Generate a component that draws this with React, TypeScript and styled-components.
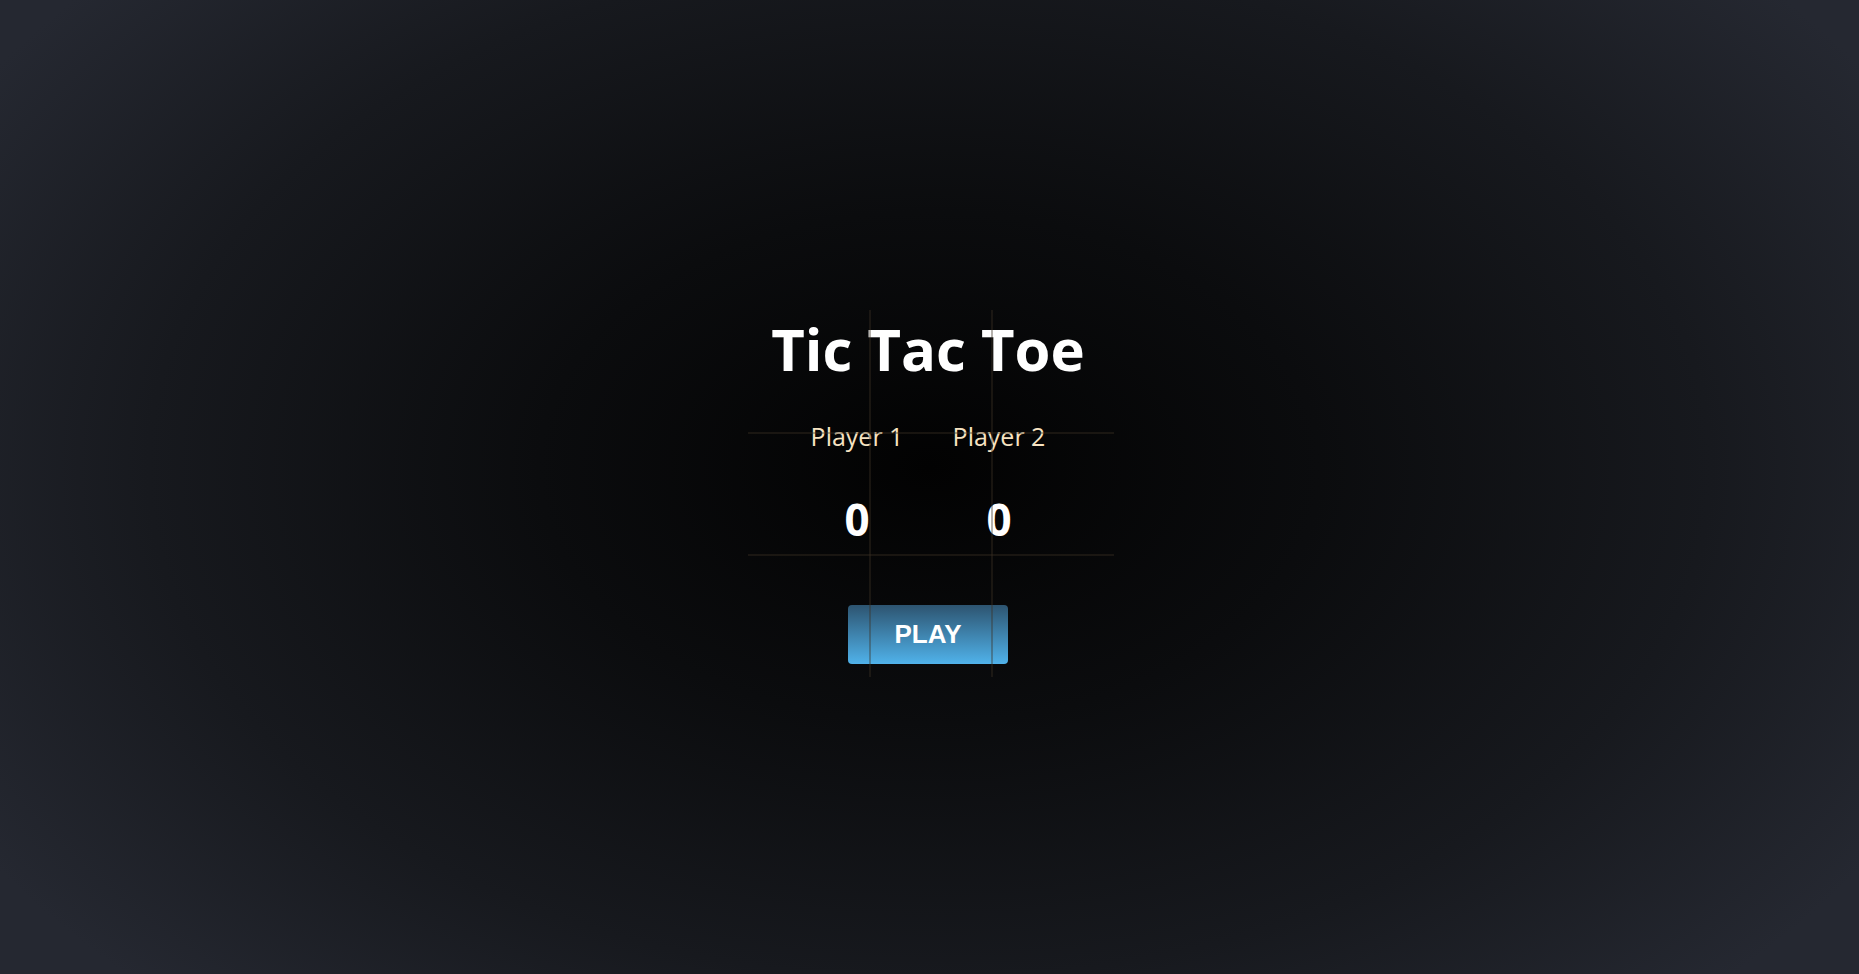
import React from "react";
import styled, { createGlobalStyle } from "styled-components";

const GlobalStyle = createGlobalStyle`
  html, body {
    margin: 0;
    padding: 0;
    height: 100%;
  }
  body {
    font-family: "Open Sans", "Noto Sans", sans-serif;
    background: #1f222a;
  }
  #root {
    height: 100%;
  }
`;

export default function App() {
  return (
    <>
      <GlobalStyle />
      <Page>
        <Stage>
          <BoardLines aria-hidden>
            <VLine $pos={122} />
            <VLine $pos={244} />
            <HLine $pos={123} />
            <HLine $pos={245} />
          </BoardLines>
          <Content>
            <Title>Tic Tac Toe</Title>
            <Scores>
              <ScoreCol>
                <PlayerName>Player 1</PlayerName>
                <Score>0</Score>
              </ScoreCol>
              <ScoreCol>
                <PlayerName>Player 2</PlayerName>
                <Score>0</Score>
              </ScoreCol>
            </Scores>
            <PlayButton>PLAY</PlayButton>
          </Content>
        </Stage>
      </Page>
    </>
  );
}

const Page = styled.div`
  min-height: 100vh;
  box-sizing: border-box;
  display: flex;
  justify-content: center;
  align-items: flex-start;
  padding-top: 310px;
  background: radial-gradient(
    ellipse 60% 75% at 50% 48%,
    #020202 0%,
    #0b0c0e 35%,
    #17191e 70%,
    #252831 100%
  );
`;

const Stage = styled.div`
  position: relative;
  width: 366px;
  height: 367px;
  margin-left: 3px;
`;

const BoardLines = styled.div`
  position: absolute;
  inset: 0;
  pointer-events: none;
  z-index: 2;
`;

const VLine = styled.div<{ $pos: number }>`
  position: absolute;
  top: 0;
  bottom: 0;
  left: ${(p) => p.$pos - 1}px;
  width: 2px;
  background: rgba(60, 50, 38, 0.38);
`;

const HLine = styled.div<{ $pos: number }>`
  position: absolute;
  left: 0;
  right: 0;
  top: ${(p) => p.$pos - 1}px;
  height: 2px;
  background: rgba(60, 50, 38, 0.38);
`;

const Content = styled.div`
  position: relative;
  z-index: 1;
  display: flex;
  flex-direction: column;
  align-items: center;
  margin-left: -6px;
`;

const Title = styled.h1`
  margin: 10px 0 0;
  font-size: 58px;
  font-weight: 700;
  line-height: 1;
  color: #ffffff;
  letter-spacing: 0;
`;

const Scores = styled.div`
  display: flex;
  gap: 38px;
  margin-top: 46px;
`;

const ScoreCol = styled.div`
  display: flex;
  flex-direction: column;
  align-items: center;
  width: 104px;
`;

const PlayerName = styled.div`
  font-size: 25px;
  line-height: 1;
  color: #f7e3c2;
`;

const Score = styled.div`
  margin-top: 48px;
  font-size: 44px;
  font-weight: 700;
  line-height: 1;
  color: #ffffff;
`;

const PlayButton = styled.button`
  margin-top: 64px;
  width: 160px;
  height: 59px;
  border: none;
  border-radius: 4px;
  background: linear-gradient(to bottom, #2d5470, #50b2ea);
  color: #ffffff;
  font-family: "Liberation Sans", Arial, sans-serif;
  font-size: 26px;
  font-weight: 700;
  cursor: pointer;
`;
